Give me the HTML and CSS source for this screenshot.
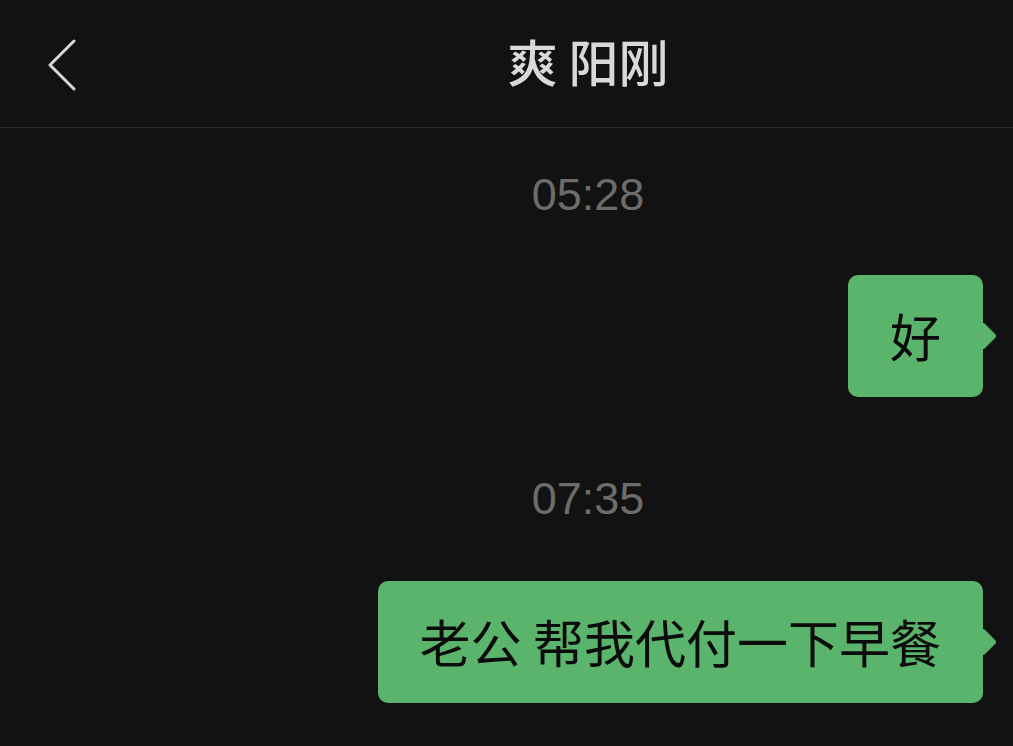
FILE: index.html
```html
<!DOCTYPE html>
<html lang="zh-CN">
<head>
    <meta charset="UTF-8">
    <meta name="viewport" content="width=device-width, initial-scale=1.0">
    <title>爽 阳刚</title>
    <link rel="stylesheet" href="styles.css">
</head>
<body>
    <header class="topbar">
        <div class="back">
            <svg width="32" height="52" viewBox="0 0 32 52">
                <polyline points="28,2 4,26 28,50" fill="none" stroke="#d6d6d6" stroke-width="3" stroke-linecap="round" stroke-linejoin="round"/>
            </svg>
        </div>
        <h1 class="title">爽 阳刚</h1>
    </header>

    <main class="chat">
        <div class="time first">05:28</div>
        <div class="row">
            <div class="bubble">好</div>
        </div>

        <div class="time">07:35</div>
        <div class="row">
            <div class="bubble">老公 帮我代付一下早餐</div>
        </div>
    </main>
</body>
</html>
```

FILE: styles.css
```css
body {
    margin: 0;
    padding: 0;
    background-color: #121212;
    font-family: "Noto Sans CJK SC", "Noto Sans", sans-serif;
    overflow: hidden;
}

.topbar {
    height: 127px;
    border-bottom: 1px solid #2a2a2a;
    display: grid;
    grid-template-columns: 163px 1fr;
    align-items: center;
}

.back {
    padding-left: 46px;
    display: flex;
    align-items: center;
    padding-top: 2px;
}

.title {
    margin: 0 0 8px;
    text-align: center;
    font-size: 50px;
    font-weight: 500;
    color: #d9d9d9;
    line-height: 1;
}

.chat {
    padding-bottom: 40px;
}

/* timestamps are centred on the phone screen, not on the crop */
.time {
    padding-left: 163px;
    text-align: center;
    font-family: "Liberation Sans", Arial, sans-serif;
    font-size: 45px;
    line-height: 60px;
    color: #6c6c6c;
    margin-top: 72px;
    margin-bottom: 52px;
}

.time.first {
    margin-top: 37px;
    margin-bottom: 50px;
}

.row {
    display: flex;
    justify-content: flex-end;
    padding-right: 30px;
}

.bubble {
    position: relative;
    background-color: #5ab46c;
    color: #0b0b0b;
    font-size: 51px;
    line-height: 72px;
    padding: 24px 42px 26px;
    border-radius: 10px;
}

.bubble::after {
    content: "";
    position: absolute;
    right: -10px;
    top: 50%;
    width: 20px;
    height: 20px;
    background-color: #5ab46c;
    border-radius: 3px;
    transform: translateY(-50%) rotate(45deg);
}
```
